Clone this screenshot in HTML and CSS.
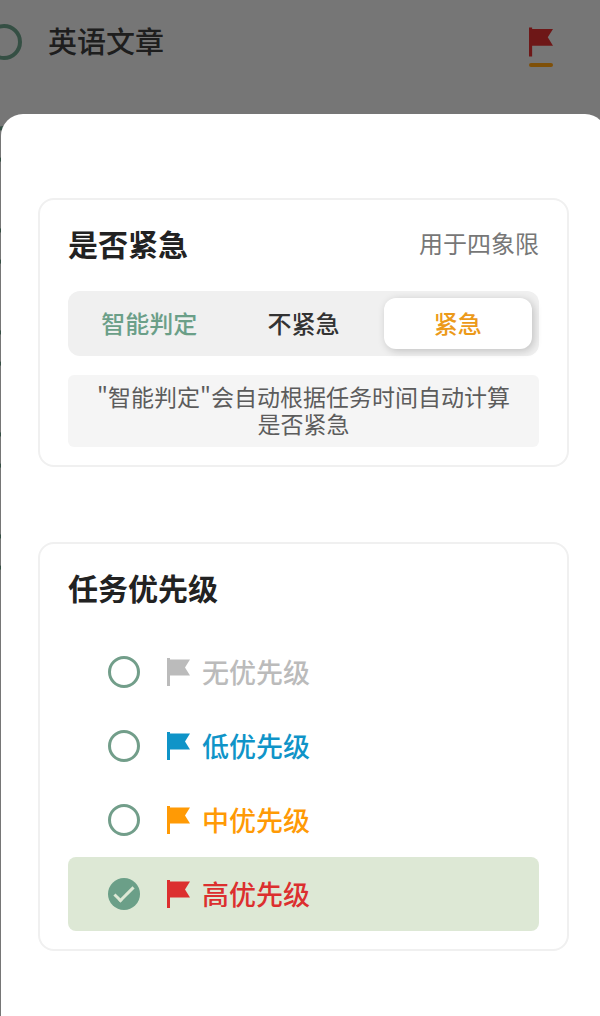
FILE: index.html
```html
<!DOCTYPE html>
<html lang="zh-CN">
<head>
    <meta charset="UTF-8">
    <meta name="viewport" content="width=device-width, initial-scale=1.0">
    <title>任务设置</title>
    <link rel="stylesheet" href="styles.css">
</head>
<body>
    <!-- 旗帜图标 -->
    <svg class="sprite" width="0" height="0" aria-hidden="true">
        <symbol id="flag" viewBox="0 0 23 28">
            <path fill="currentColor" d="M0 0h3v1.5h20l-5 8 5 8H3V28H0z"/>
        </symbol>
    </svg>

    <!-- 底层任务列表 -->
    <div class="task-list">
        <div class="task">
            <span class="task-ring"></span>
            <span class="task-name">英语文章</span>
            <span class="task-mark level-high"><svg class="task-flag"><use href="#flag"/></svg></span>
        </div>
        <div class="task"><span class="task-ring"></span></div>
        <div class="task"><span class="task-ring"></span></div>
        <div class="task"><span class="task-ring"></span></div>
        <div class="task"><span class="task-ring"></span></div>
        <div class="task"><span class="task-ring"></span></div>
    </div>

    <!-- 弹出面板 -->
    <div class="overlay">
        <main class="sheet">
            <section class="card">
                <div class="card-head">
                    <h2>是否紧急</h2>
                    <span class="card-note">用于四象限</span>
                </div>
                <div class="segments">
                    <button type="button" class="segment auto">智能判定</button>
                    <button type="button" class="segment">不紧急</button>
                    <button type="button" class="segment active">紧急</button>
                </div>
                <p class="hint">"智能判定"会自动根据任务时间自动计算是否紧急</p>
            </section>

            <section class="card">
                <div class="card-head">
                    <h2>任务优先级</h2>
                </div>
                <div class="levels">
                    <label class="level level-none">
                        <input type="radio" name="level">
                        <svg class="level-flag"><use href="#flag"/></svg>
                        <span>无优先级</span>
                    </label>
                    <label class="level level-low">
                        <input type="radio" name="level">
                        <svg class="level-flag"><use href="#flag"/></svg>
                        <span>低优先级</span>
                    </label>
                    <label class="level level-mid">
                        <input type="radio" name="level">
                        <svg class="level-flag"><use href="#flag"/></svg>
                        <span>中优先级</span>
                    </label>
                    <label class="level level-high">
                        <input type="radio" name="level" checked>
                        <svg class="level-flag"><use href="#flag"/></svg>
                        <span>高优先级</span>
                    </label>
                </div>
            </section>
        </main>
    </div>
</body>
</html>
```
FILE: styles.css
```css
*, *::before, *::after { margin: 0; padding: 0; box-sizing: border-box; }

body {
    font-family: "Noto Sans CJK SC", sans-serif;
    background: #ececec;
    color: #222;
    min-height: 100vh;
    position: relative;
    overflow-x: hidden;
}

.sprite { position: absolute; }

/* 任务列表 */
.task-list {
    padding-top: 24px;
    padding-right: 47px;
}

.task {
    display: flex;
    align-items: center;
    gap: 26px;
    height: 36px;
    margin-bottom: 66px;
}

.task-ring {
    width: 36px;
    height: 36px;
    margin-left: -14px;
    border: 4px solid #6b9f88;
    border-radius: 50%;
}

.task-name {
    flex: 1;
    padding-bottom: 4px;
    font-size: 29px;
    font-weight: 500;
    line-height: 36px;
    color: #3c3c3c;
}

.task-mark {
    display: flex;
    flex-direction: column;
    gap: 6px;
    padding-top: 10px;
}

.task-mark::after {
    content: "";
    height: 4px;
    border-radius: 2px;
    background: #ffa010;
}

.task-flag { width: 24px; height: 30px; }

/* 遮罩和面板 */
.overlay {
    position: absolute;
    inset: 0;
    min-height: 100vh;
    display: flex;
    flex-direction: column;
    padding-top: 114px;
    background: rgba(0, 0, 0, .5);
    overflow: hidden;
}

.sheet {
    flex: 1;
    display: flex;
    flex-direction: column;
    gap: 75px;
    margin-left: 1px;
    margin-right: -7px;
    padding: 84px 38px 64px 37px;
    background: #fff;
    border-radius: 22px 22px 0 0;
}

.card {
    padding: 25px 28px 18px;
    border: 2px solid #f0f0f0;
    border-radius: 16px;
}

.card-head {
    display: flex;
    justify-content: space-between;
    align-items: center;
    margin-bottom: 30px;
}

.card-head h2 {
    font-size: 30px;
    font-weight: 700;
    line-height: 36px;
}

.card-note {
    font-size: 24px;
    line-height: 36px;
    color: #777;
}

.segments {
    display: grid;
    grid-template-columns: repeat(3, 1fr);
    gap: 6px;
    padding: 7px;
    border-radius: 12px;
    background: #f0f0f0;
}

.segment {
    height: 51px;
    padding-bottom: 2px;
    border: none;
    border-radius: 12px;
    background: none;
    font-family: inherit;
    font-size: 24px;
    font-weight: 500;
    color: #333;
    cursor: pointer;
}

.segment.auto { color: #6b9f88; }

.segment.active {
    background: #fff;
    color: #ec9a1a;
    box-shadow: 2px 2px 8px rgba(0, 0, 0, .2);
}

.hint {
    margin-top: 19px;
    padding: 8px 24px 10px;
    border-radius: 6px;
    background: #f5f5f5;
    font-size: 23px;
    line-height: 27px;
    text-align: center;
    color: #5c5c5c;
}

/* 优先级选项 */
.level {
    display: flex;
    align-items: center;
    height: 74px;
    padding-left: 40px;
    border-radius: 8px;
    font-size: 27px;
    font-weight: 500;
    cursor: pointer;
}

.level:has(input:checked) { background: #dde8d5; }

.level span { padding-bottom: 2px; }

.level input {
    appearance: none;
    position: relative;
    width: 32px;
    height: 32px;
    margin-right: 27px;
    border: 3px solid #729e8a;
    border-radius: 50%;
}

.level input:checked {
    border: none;
    background: #6b9f88;
}

.level input:checked::after {
    content: "";
    position: absolute;
    left: 11px;
    top: 4px;
    width: 10px;
    height: 20px;
    border: solid #dde8d5;
    border-width: 0 3px 3px 0;
    transform: rotate(45deg);
}

.level-flag {
    width: 23px;
    height: 28px;
    margin-right: 12px;
}

.level-none { color: #bbb; }
.level-low { color: #0f94c8; }
.level-mid { color: #ff9a05; }
.level-high { color: #dc2f2f; }
```
